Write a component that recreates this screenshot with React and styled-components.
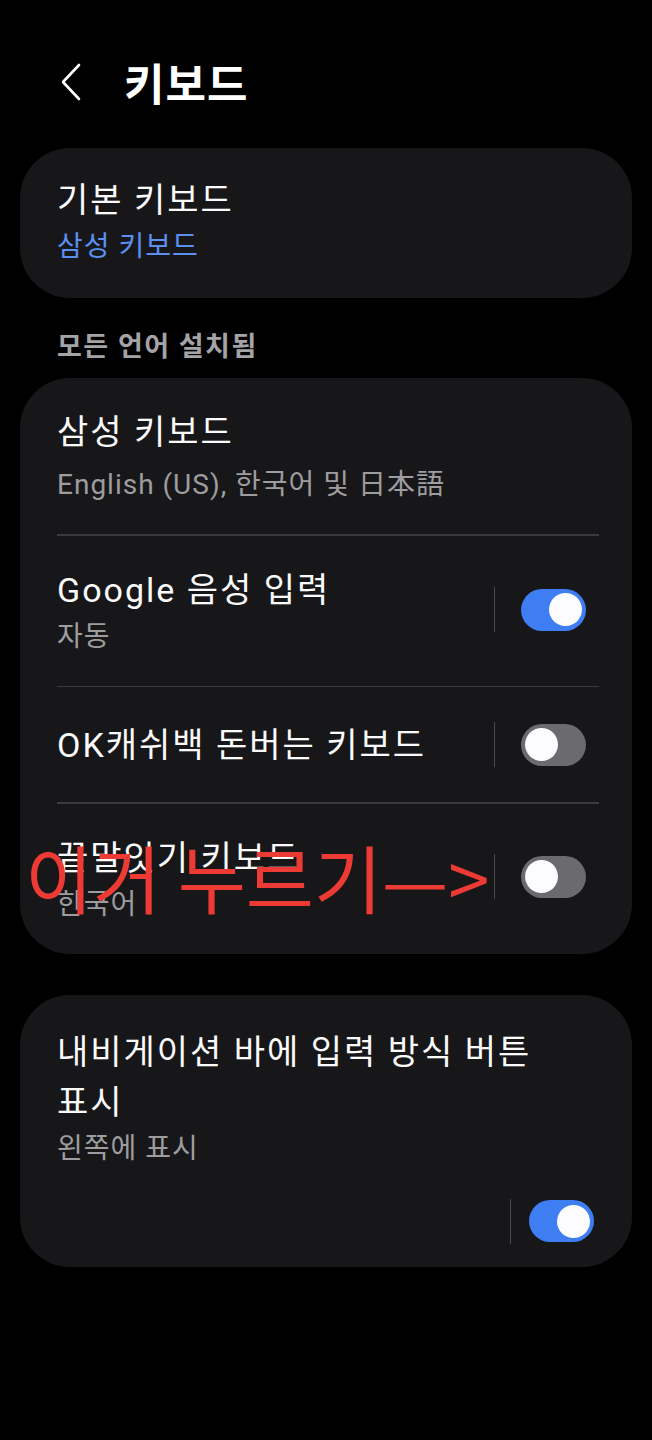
import React from "react";
import styled, { createGlobalStyle } from "styled-components";

const GlobalStyle = createGlobalStyle`
  html, body {
    margin: 0;
    padding: 0;
    background: #000;
  }
  body {
    font-family: Roboto, "Noto Sans CJK KR", sans-serif;
    color: #fafafa;
  }
`;

function BackIcon() {
  return (
    <svg width="22" height="40" viewBox="0 0 22 40" fill="none">
      <path d="M19 3 L3 20 L19 37" stroke="#fff" strokeWidth="2.6" strokeLinecap="round" strokeLinejoin="round" />
    </svg>
  );
}

function Toggle({ on }) {
  return (
    <Track on={on ? 1 : 0}>
      <Knob />
    </Track>
  );
}

function App() {
  return (
    <Page>
      <GlobalStyle />
      <Header>
        <BackButton>
          <BackIcon />
        </BackButton>
        <PageTitle>키보드</PageTitle>
      </Header>

      <Card>
        <Row pt={30} pb={26}>
          <TextBox>
            <Title>기본 키보드</Title>
            <Sub accent>삼성 키보드</Sub>
          </TextBox>
        </Row>
      </Card>

      <SectionLabel>모든 언어 설치됨</SectionLabel>

      <Card>
        <Row pt={32} pb={24}>
          <TextBox>
            <Title>삼성 키보드</Title>
            <Sub gap={6}>English (US), 한국어 및 日本語</Sub>
          </TextBox>
        </Row>
        <Divider />
        <Row pt={32} pb={24}>
          <TextBox>
            <Title>Google 음성 입력</Title>
            <Sub>자동</Sub>
          </TextBox>
          <SwitchArea lift={10}>
            <VLine />
            <Toggle on />
          </SwitchArea>
        </Row>
        <Divider />
        <Row pt={35} pb={35}>
          <TextBox>
            <Title>OK캐쉬백 돈버는 키보드</Title>
          </TextBox>
          <SwitchArea>
            <VLine />
            <Toggle />
          </SwitchArea>
        </Row>
        <Divider />
        <Row pt={32} pb={24}>
          <TextBox>
            <Title>끝말잇기 키보드</Title>
            <Sub>한국어</Sub>
          </TextBox>
          <SwitchArea lift={12}>
            <VLine />
            <Toggle />
          </SwitchArea>
          <Scribble>이거 누르기—&gt;</Scribble>
        </Row>
      </Card>

      <Card spaced>
        <NavRow>
          <TextBox>
            <Title tall>내비게이션 바에 입력 방식 버튼 표시</Title>
            <Sub short>왼쪽에 표시</Sub>
          </TextBox>
          <NavSwitch>
            <VLine />
            <Toggle on />
          </NavSwitch>
        </NavRow>
      </Card>
    </Page>
  );
}

const Page = styled.div`
  width: 652px;
  min-height: 1440px;
  background: #000;
  padding: 0 20px;
  box-sizing: border-box;
`;

const Header = styled.div`
  display: flex;
  align-items: center;
  height: 148px;
  padding: 16px 0 0 40px;
  box-sizing: border-box;
`;

const BackButton = styled.div`
  display: flex;
  align-items: center;
  width: 64px;
`;

const PageTitle = styled.h1`
  margin: 0;
  font-size: 44px;
  font-weight: 700;
  letter-spacing: 1px;
  color: #fff;
`;

const Card = styled.div`
  background: #17171a;
  border-radius: 50px;
  padding: 0 33px 0 37px;
  margin-top: ${(p) => (p.spaced ? "41px" : "0")};
`;

const Row = styled.div`
  position: relative;
  display: flex;
  align-items: center;
  padding: ${(p) => p.pt}px 0 ${(p) => p.pb}px;
`;

const TextBox = styled.div`
  flex: 1;
  display: flex;
  flex-direction: column;
`;

const Title = styled.div`
  font-size: 34px;
  line-height: ${(p) => (p.tall ? "50px" : "44px")};
  letter-spacing: 2px;
  color: #fafafa;
  word-break: keep-all;
`;

const Sub = styled.div`
  margin-top: ${(p) => p.gap || 0}px;
  font-size: 28px;
  line-height: ${(p) => (p.short ? "44px" : "50px")};
  letter-spacing: 1px;
  color: ${(p) => (p.accent ? "#5b8ff0" : "#9d9d9f")};
`;

const SectionLabel = styled.div`
  padding: 29px 0 0 37px;
  height: 80px;
  box-sizing: border-box;
  font-size: 27px;
  line-height: 40px;
  font-weight: 700;
  color: #a4a4a6;
  letter-spacing: 1.5px;
`;

const Divider = styled.div`
  height: 1.5px;
  background: #3a3a3d;
`;

const SwitchArea = styled.div`
  display: flex;
  align-items: center;
  gap: 26px;
  margin-right: 13px;
  margin-bottom: ${(p) => p.lift || 0}px;
`;

const NavRow = styled.div`
  display: flex;
  flex-direction: column;
  padding: 32px 0 23px;
`;

const NavSwitch = styled.div`
  display: flex;
  align-items: center;
  justify-content: flex-end;
  gap: 18px;
  margin-right: 5px;
  margin-top: 28px;
`;

const VLine = styled.div`
  width: 1.5px;
  height: 45px;
  background: #4a4a4e;
`;

const Track = styled.div`
  width: 65px;
  height: 42px;
  border-radius: 21px;
  background: ${(p) => (p.on ? "#3e7df2" : "#6a6a6f")};
  display: flex;
  align-items: center;
  justify-content: ${(p) => (p.on ? "flex-end" : "flex-start")};
  padding: 0 4px;
  box-sizing: border-box;
`;

const Knob = styled.div`
  width: 33px;
  height: 33px;
  border-radius: 50%;
  background: #fcfcff;
`;

const Scribble = styled.div`
  position: absolute;
  left: -32px;
  top: 32px;
  font-family: "Noto Sans CJK KR", sans-serif;
  font-weight: 400;
  font-size: 74px;
  line-height: 80px;
  color: #ee3a34;
  white-space: nowrap;
  pointer-events: none;
`;

export default App;
